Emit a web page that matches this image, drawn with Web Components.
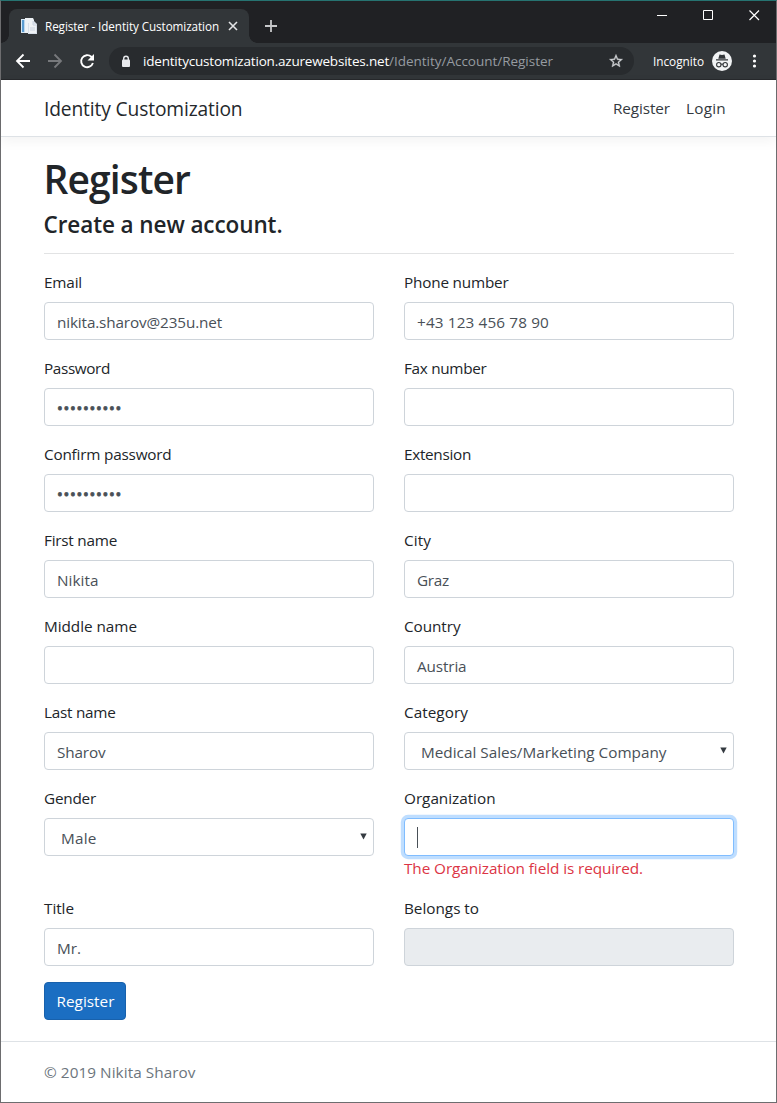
<!DOCTYPE html>
<html lang="en">
<head>
<meta charset="utf-8">
<title>Register - Identity Customization</title>
<style>
html,body{margin:0;height:100%}
body{font-family:"Open Sans","Noto Sans",sans-serif;font-size:15.3px;line-height:24px;color:#212529;background:#fff;overflow:hidden}
</style>
</head>
<body>
<browser-window>
  <browser-chrome slot="chrome"></browser-chrome>
  <site-header></site-header>
  <register-form></register-form>
  <site-footer></site-footer>
</browser-window>
<script>
const define = (name, html, setup) => customElements.define(name, class extends HTMLElement {
  constructor(){
    super();
    this.attachShadow({mode:'open'}).innerHTML = html;
  }
  connectedCallback(){ if (setup) setup(this, this.shadowRoot); }
});

/* Text run tracked so that it fills the width given in "w". */
define('fit-text', `<style>:host{display:inline-block;flex:none;white-space:pre}</style><slot></slot>`, el => {
  const fit = () => {
    const w = parseFloat(el.getAttribute('w'));
    const n = el.textContent.length;
    el.style.letterSpacing = '0';
    const natural = el.getBoundingClientRect().width;
    if (w && n && natural) el.style.letterSpacing = ((w - natural) / n).toFixed(3) + 'px';
  };
  requestAnimationFrame(fit);
  fit();
});

define('browser-window', `<style>
:host{display:flex;flex-direction:column;box-sizing:border-box;height:1103px;width:777px;border:1px solid #6d6d6f;border-top-color:#267371}
main{display:flex;flex-direction:column;flex:1;min-height:0;background:#fff}
</style><slot name="chrome"></slot><main><slot></slot></main>`);

define('browser-chrome', `<style>
:host{display:block;flex:none;height:79px;box-sizing:border-box;background:#202124;color:#fff;line-height:16px}
svg{display:block;flex:none}
.strip{display:flex;height:42px;align-items:flex-end}
.tab{position:relative;display:flex;align-items:center;box-sizing:border-box;width:240px;height:34px;margin-left:8px;padding-left:12px;background:#323639;border-radius:8px 8px 0 0;font-size:11.7px}
.tab::before,.tab::after{content:"";position:absolute;bottom:0;width:8px;height:8px}
.tab::before{left:-8px;background:radial-gradient(circle at 0 0,transparent 7.5px,#323639 8px)}
.tab::after{right:-8px;background:radial-gradient(circle at 100% 0,transparent 7.5px,#323639 8px)}
.title{margin-left:8px}
.close{margin-left:9px}
.new{margin:0 0 10px 15px}
.controls{align-self:flex-start;display:flex;margin:9px 16px 0 auto;gap:35px}
.bar{display:flex;align-items:center;height:36px;background:#323639;border-bottom:1px solid #27292c}
.nav{display:flex;gap:16px;margin-left:14px}
.url{display:flex;align-items:center;box-sizing:border-box;width:525px;height:28px;margin-left:14px;padding:0 10px 0 12px;border-radius:14px;background:#282b2e;font-size:13.5px}
.url .text{margin-left:12px;display:flex;white-space:pre}
.path{color:#969ba1}
.star{margin-left:auto}
.inc{margin-left:19px;font-size:11.8px}
.badge{margin-left:8px}.more{margin-left:18px}
</style>
<div class="strip">
 <div class="tab">
  <svg width="16" height="16" viewBox="0 0 16 16"><path d="M0 1h5v14H0z" fill="#d8e8f4"/><path d="M1 2h2.200v12H1z" fill="#5a9bd0"/><path d="M4 0h8l1 2v13H4z" fill="#edf2f6"/><path d="M7 3h6l3 3v10H7z" fill="#d8dfe8"/><path d="M7 3h5v3h3v9H8V5H7z" fill="#eff2f5"/><path d="M12 3v4h4M9 10h5M9 12h5" stroke="#c9d2df" fill="none"/></svg>
  <fit-text class="title" w="174">Register - Identity Customization</fit-text>
  <svg class="close" width="10" height="10" viewBox="0 0 10 10"><path d="M1 1l8 8M9 1L1 9" stroke="#e3e4e6" stroke-width="1.6"/></svg>
 </div>
 <svg class="new" width="14" height="14" viewBox="0 0 14 14"><path d="M7 1v12M1 7h12" stroke="#c7c8ca" stroke-width="1.8"/></svg>
 <div class="controls">
  <svg width="11" height="11"><path d="M0 5.5h10" stroke="#fff"/></svg>
  <svg width="11" height="11"><path d="M.5.5h9v9h-9z" stroke="#fff" fill="none"/></svg>
  <svg width="11" height="11"><path d="M.5.5l9.5 9.5M10 .5L.5 10" stroke="#fff" stroke-width="1.2"/></svg>
 </div>
</div>
<div class="bar">
 <div class="nav">
  <svg width="16" height="16" viewBox="0 0 16 16"><path d="M15 8H2.5M8.5 1.5L2 8l6.500 6.500" stroke="#fff" stroke-width="1.800" fill="none"/></svg>
  <svg width="16" height="16" viewBox="0 0 16 16"><path d="M1 8h12.500M7.500 1.500L14 8l-6.500 6.500" stroke="#77797c" stroke-width="1.800" fill="none"/></svg>
  <svg width="16" height="16" viewBox="0 0 16 16"><path d="M13.900 10A6 6 0 1 1 12.300 3.800L14 5.500" stroke="#fff" stroke-width="1.900" fill="none"/><path d="M15 1v6.500H8.500z" fill="#fff"/></svg>
 </div>
 <div class="url">
  <svg width="10" height="13" viewBox="0 0 10 13"><path d="M2.700 5V3.500a2.300 2.300 0 0 1 4.600 0V5" stroke="#e8eaed" stroke-width="1.400" fill="none"/><rect x="1" y="4.500" width="8" height="7.500" rx="1" fill="#e8eaed"/></svg>
  <span class="text"><fit-text w="246">identitycustomization.azurewebsites.net</fit-text><fit-text class="path" w="164">/Identity/Account/Register</fit-text></span>
  <svg class="star" width="16" height="16" viewBox="0 0 24 24"><path d="M22 9.240l-7.190-.62L12 2 9.190 8.630 2 9.240l5.460 4.730L5.820 21 12 17.270 18.180 21l-1.630-7.030L22 9.240zM12 15.400l-3.760 2.270 1-4.280-3.320-2.880 4.380-.38L12 6.100l1.710 4.040 4.380.38-3.320 2.880 1 4.280L12 15.400z" fill="#cfd1d4" stroke="#cfd1d4" stroke-width=".5"/></svg>
 </div>
 <fit-text class="inc" w="51">Incognito</fit-text>
 <svg class="badge" width="20" height="20" viewBox="0 0 20 20"><circle cx="10" cy="10" r="10" fill="#f1f3f4"/><path d="M7.500 3.500l2.500.6 2.500-.6 1.200 4.200H6.300zM4 8.300h12v1.100H4z" fill="#323639"/><g fill="none" stroke="#323639" stroke-width="1.100"><circle cx="6.800" cy="13.700" r="2.200"/><circle cx="13.200" cy="13.700" r="2.200"/><path d="M9 13.400q1-.6 2 0"/></g></svg>
 <svg class="more" width="8" height="16" viewBox="0 0 8 16"><g fill="#fff"><circle cx="4.500" cy="3" r="1.600"/><circle cx="4.500" cy="8" r="1.600"/><circle cx="4.500" cy="13" r="1.600"/></g></svg>
</div>`);

define('site-header', `<style>
:host{display:flex;flex:none;align-items:center;box-sizing:border-box;height:57px;padding:0 50px 0 43px;border-bottom:1px solid #dee2e6;box-shadow:0 4px 12px rgba(0,0,0,.05);background:#fff}
.brand{font-size:19.200px;color:#24282c;padding-top:2px}
nav{margin-left:auto;display:flex;gap:16px;color:#343a40}
</style><fit-text class="brand" w="198.500">Identity Customization</fit-text>
<nav><fit-text w="57">Register</fit-text><fit-text w="40">Login</fit-text></nav>`);

/* A label above a text box, drop-down or read-only box. */
define('form-field', `<style>
:host{display:block;margin-bottom:16px}
.label{display:block;height:24px;line-height:25px;margin-bottom:8px}
.box{display:flex;align-items:center;box-sizing:border-box;height:38px;padding:2px 9px 0 12px;border:1px solid #ced4da;border-radius:4px;background:#fff;color:#495057}
:host([kind=select]) .box{padding:2px 6px 0 16px}
:host([kind=disabled]) .box{background:#e9ecef}
:host([kind=focus]) .box{border-color:#80bdff;box-shadow:0 0 0 3.200px rgba(0,123,255,.25)}
svg,.caret{display:none}
:host([kind=select]) svg{display:block;margin:-2px 0 0 auto}
:host([kind=focus]) .caret{display:block;width:1px;height:21px;background:#495057}
:host([kind=secret]) .value{-webkit-text-stroke:.8px #495057}
</style><div class="label"></div><div class="box"><span class="value"></span><i class="caret"></i><svg width="7" height="7" viewBox="0 0 7 7"><path d="M.3.500h6.400L3.500 6.500z" fill="#343a40"/></svg></div><slot></slot>`, (el, root) => {
  const run = (text, w) => { const t = document.createElement('fit-text'); t.textContent = text; t.setAttribute('w', w); return t; };
  if (root.querySelector('.label').firstChild) return;
  root.querySelector('.label').append(run(el.getAttribute('label'), el.getAttribute('lw')));
  const v = el.getAttribute('value');
  if (v) root.querySelector('.value').append(run(v, el.getAttribute('vw')));
});

define('register-form', `<style>
:host{display:block;flex:none;padding:15px 42px 0 43px}
h1{margin:0 0 8px;font-size:39px;line-height:53px;height:48px;font-weight:600}
h4{margin:0 0 16px;font-size:22.500px;line-height:34px;height:28.800px;font-weight:600}
h1 fit-text,h4 fit-text{margin-left:-.5px}
hr{margin:0 0 16px;border:0;border-top:1px solid #e2e3e4}
.cols{display:grid;grid-template-columns:330px 330px;column-gap:30px}
.error{display:block;height:24px;line-height:25px;color:#dc3545}
.btn{display:flex;align-items:center;justify-content:center;box-sizing:border-box;width:82px;height:38px;padding-left:1px;border:1px solid #1861ac;border-radius:4px;background:#1b6ec2;color:#fff}
</style>
<h1><fit-text w="146.500">Register</fit-text></h1>
<h4><fit-text w="239">Create a new account.</fit-text></h4><hr>
<div class="cols">
<form-field label="Email" lw="38" value="nikita.sharov@235u.net" vw="165"></form-field>
<form-field label="Phone number" lw="104.500" value="+43 123 456 78 90" vw="132"></form-field>
<form-field label="Password" kind="secret" lw="66" value="••••••••••" vw="65"></form-field>
<form-field label="Fax number" lw="82.500"></form-field>
<form-field label="Confirm password" kind="secret" lw="127.500" value="••••••••••" vw="65"></form-field>
<form-field label="Extension" lw="67"></form-field>
<form-field label="First name" lw="73" value="Nikita" vw="41.500"></form-field>
<form-field label="City" lw="27" value="Graz" vw="32"></form-field>
<form-field label="Middle name" lw="93"></form-field>
<form-field label="Country" lw="56.500" value="Austria" vw="49.500"></form-field>
<form-field label="Last name" lw="71.500" value="Sharov" vw="48.500"></form-field>
<form-field label="Category" lw="64" kind="select" value="Medical Sales/Marketing Company" vw="245.500"></form-field>
<form-field label="Gender" lw="52" kind="select" value="Male" vw="35.500"></form-field>
<form-field label="Organization" lw="91.500" kind="focus"><div class="error"><fit-text w="239">The Organization field is required.</fit-text></div></form-field>
<form-field label="Title" lw="30" value="Mr." vw="24"></form-field>
<form-field label="Belongs to" lw="75" kind="disabled"></form-field>
</div>
<div class="btn"><fit-text w="58">Register</fit-text></div>`);

define('site-footer', `<style>
:host{display:flex;align-items:center;flex:1;margin-top:21px;padding:0 43px;border-top:1px solid #dee2e6;color:#6c757d}
</style><fit-text w="151.500">© 2019 Nikita Sharov</fit-text>`);
</script>
</body>
</html>
